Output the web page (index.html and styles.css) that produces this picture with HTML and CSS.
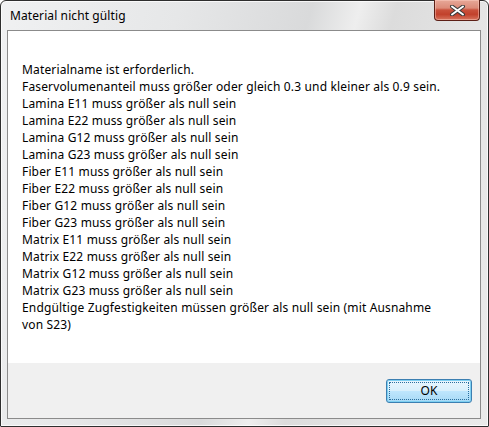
FILE: index.html
```html
<!DOCTYPE html>
<html lang="de">
<head>
<meta charset="utf-8">
<title>Material nicht gültig</title>
<link rel="stylesheet" href="styles.css">
</head>
<body>
<div class="window">
  <div class="titlebar">
    <span class="title">Material nicht gültig</span>
    <button class="close" aria-label="Schließen">
      <svg width="17" height="11" viewBox="0 0 17 11">
        <path d="M3 1.5 L14 9.5 M14 1.5 L3 9.5" stroke="#3a3a3a" stroke-width="4" stroke-linecap="round"/>
        <path d="M3 1.5 L14 9.5 M14 1.5 L3 9.5" stroke="#ffffff" stroke-width="2" stroke-linecap="round"/>
      </svg>
    </button>
  </div>
  <div class="client">
    <div class="content">
      <p class="line">Materialname ist erforderlich.</p>
      <p class="line">Faservolumenanteil muss größer oder gleich 0.3 und kleiner als 0.9 sein.</p>
      <p class="line">Lamina E11 muss größer als null sein</p>
      <p class="line">Lamina E22 muss größer als null sein</p>
      <p class="line">Lamina G12 muss größer als null sein</p>
      <p class="line">Lamina G23 muss größer als null sein</p>
      <p class="line">Fiber E11 muss größer als null sein</p>
      <p class="line">Fiber E22 muss größer als null sein</p>
      <p class="line">Fiber G12 muss größer als null sein</p>
      <p class="line">Fiber G23 muss größer als null sein</p>
      <p class="line">Matrix E11 muss größer als null sein</p>
      <p class="line">Matrix E22 muss größer als null sein</p>
      <p class="line">Matrix G12 muss größer als null sein</p>
      <p class="line">Matrix G23 muss größer als null sein</p>
      <p class="line wrap">Endgültige Zugfestigkeiten müssen größer als null sein (mit Ausnahme von S23)</p>
    </div>
    <div class="footer">
      <button class="ok"><span class="focus">OK</span></button>
    </div>
  </div>
</div>
</body>
</html>
```

FILE: styles.css
```css
* { box-sizing: border-box; }

html, body {
  margin: 0;
  padding: 0;
  width: 489px;
  height: 427px;
  overflow: hidden;
  background: #ffffff;
}

.window {
  width: 489px;
  height: 427px;
  border: 1px solid #2e2e2e;
  border-radius: 6px 6px 1px 1px;
  box-shadow: inset 0 0 0 1px rgba(255,255,255,0.75);
  background:
    linear-gradient(105deg,
      #f0f1f2 0%,
      #e6e7e8 30%,
      #d9dadb 52%,
      #eeeeee 60%,
      #dcdcdc 66%,
      #e4e4e4 80%,
      #eaeaea 100%);
  display: flex;
  flex-direction: column;
  font-family: "Noto Sans", "Open Sans", "DejaVu Sans", sans-serif;
  font-size: 12px;
  color: #000;
}

.titlebar {
  height: 29px;
  display: flex;
  align-items: flex-start;
  padding-left: 9px;
  padding-right: 8px;
}

.title {
  margin-top: 6px;
  font-size: 12px;
  line-height: 17px;
  letter-spacing: 0.1px;
  color: #000;
}

.close {
  margin-left: auto;
  margin-top: -1px;
  width: 46px;
  height: 21px;
  padding: 0;
  border: 1px solid #5c1f16;
  border-top: none;
  border-radius: 0 0 4px 4px;
  background: linear-gradient(#e7a898 0%, #dc8b79 40%, #c9503b 50%, #c2412c 72%, #d7745e 100%);
  box-shadow: inset 0 0 0 1px rgba(255,210,200,0.45);
  display: flex;
  align-items: center;
  justify-content: center;
}

.client {
  flex: 1;
  margin: 0 7px 7px 6px;
  border: 1px solid #8b8b8b;
  display: flex;
  flex-direction: column;
}

.content {
  flex: 1;
  background: #ffffff;
  padding: 30px 13px 0 14px;
}

.line {
  margin: 0;
  line-height: 17px;
  letter-spacing: 0.15px;
  white-space: nowrap;
}

.line.wrap {
  white-space: normal;
  width: 425px;
}

.footer {
  height: 55px;
  background: #f0f0f0;
  display: flex;
  justify-content: flex-end;
  align-items: flex-start;
  padding: 16px 8px 0 0;
}

.ok {
  width: 86px;
  height: 24px;
  padding: 2px;
  border: 1px solid #3c7fb1;
  border-radius: 3px;
  background: linear-gradient(#eaf6fd 0%, #d9f0fc 48%, #bee6fd 52%, #a7d9f5 100%);
  box-shadow: inset 0 0 0 1px #7ed0f2;
  font-family: "Noto Sans", "Open Sans", "DejaVu Sans", sans-serif;
  font-size: 12px;
  color: #000;
  display: flex;
}

.focus {
  flex: 1;
  border: 1px dotted #2a6f9e;
  display: flex;
  align-items: center;
  justify-content: center;
  line-height: 14px;
}
```
